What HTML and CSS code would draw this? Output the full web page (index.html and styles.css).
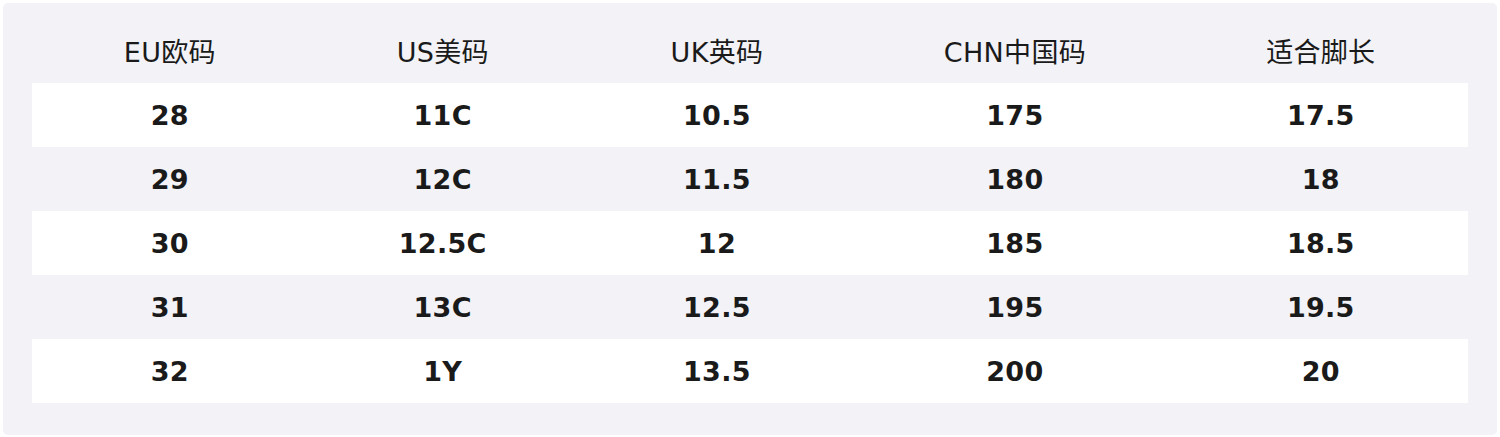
FILE: index.html
```html
<!DOCTYPE html>
<html lang="zh">
<head>
<meta charset="utf-8">
<title>尺码表</title>
<link rel="stylesheet" href="styles.css">
</head>
<body>
<div class="card">
  <table class="size-table">
    <colgroup>
      <col class="c1"><col class="c2"><col class="c3"><col class="c4"><col class="c5">
    </colgroup>
    <thead>
      <tr><th>EU欧码</th><th>US美码</th><th>UK英码</th><th>CHN中国码</th><th>适合脚长</th></tr>
    </thead>
    <tbody>
      <tr><td>28</td><td>11C</td><td>10.5</td><td>175</td><td>17.5</td></tr>
      <tr><td>29</td><td>12C</td><td>11.5</td><td>180</td><td>18</td></tr>
      <tr><td>30</td><td>12.5C</td><td>12</td><td>185</td><td>18.5</td></tr>
      <tr><td>31</td><td>13C</td><td>12.5</td><td>195</td><td>19.5</td></tr>
      <tr><td>32</td><td>1Y</td><td>13.5</td><td>200</td><td>20</td></tr>
    </tbody>
  </table>
</div>
</body>
</html>
```
FILE: styles.css
```css
html, body {
  margin: 0;
  padding: 0;
  background: #ffffff;
}
body {
  font-family: "DejaVu Sans", "Noto Sans CJK SC", sans-serif;
  color: #1a1a1a;
}
.card {
  margin: 3px;
  height: 432px;
  box-sizing: border-box;
  padding: 0 29px 32px;
  background: #f2f2f7;
  border-radius: 5px;
}
.size-table {
  width: 100%;
  border-collapse: collapse;
  table-layout: fixed;
}
.c1 { width: 19.2%; }
.c2 { width: 18.8%; }
.c3 { width: 19.4%; }
.c4 { width: 22.1%; }
.c5 { width: 20.5%; }
.size-table th {
  height: 80px;
  box-sizing: border-box;
  padding: 14px 0 0;
  font-weight: normal;
  font-size: 27px;
  letter-spacing: 0.3px;
  text-align: center;
  vertical-align: middle;
}
.size-table td {
  height: 64px;
  padding: 0;
  font-weight: bold;
  font-size: 27px;
  letter-spacing: 0.3px;
  text-align: center;
  vertical-align: middle;
}
.size-table tbody tr:nth-child(odd) td {
  background: #ffffff;
}
```
